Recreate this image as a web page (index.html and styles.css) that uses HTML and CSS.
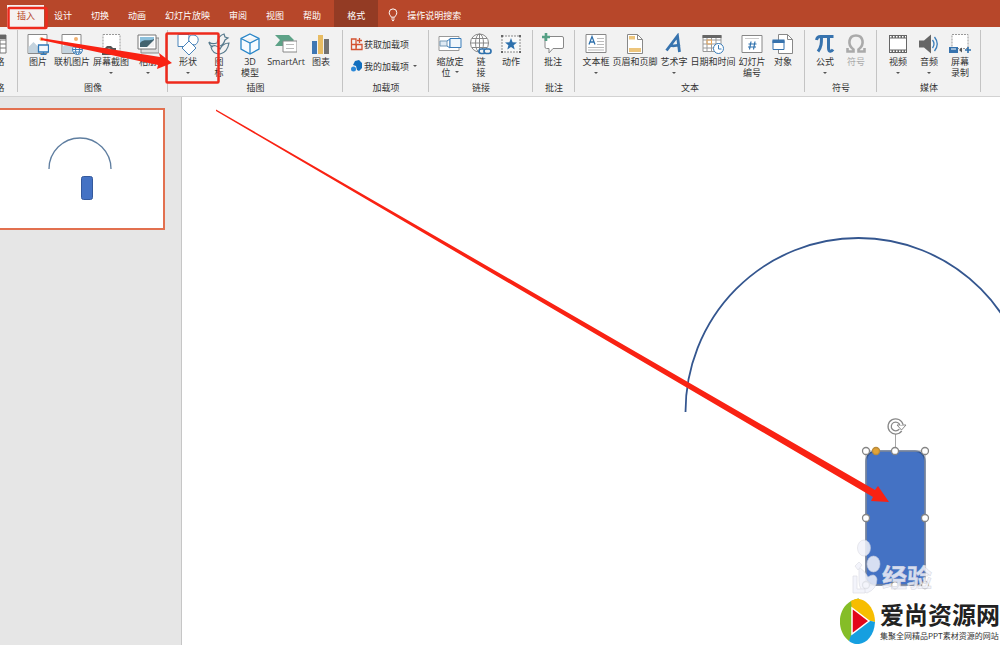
FILE: index.html
```
<!DOCTYPE html>
<html lang="zh-CN">
<head>
<meta charset="utf-8">
<title>演示文稿</title>
<link rel="stylesheet" href="styles.css">
</head>
<body>
<div class="app">
  <nav class="tabs">
    <button class="tab active">插入</button>
    <button class="tab">设计</button>
    <button class="tab">切换</button>
    <button class="tab">动画</button>
    <button class="tab">幻灯片放映</button>
    <button class="tab">审阅</button>
    <button class="tab">视图</button>
    <button class="tab">帮助</button>
    <button class="tab context">格式</button>
    <button class="tab tell">
      <svg class="bulb" viewBox="0 0 10 14"><path d="M3.2 9.2C3 7.800 1.200 7 1.200 4.700a3.800 3.800 0 0 1 7.600 0C8.800 7 7 7.800 6.800 9.200zM3.300 11h3.400M4 12.600h2" fill="none" stroke="#fff"/></svg>
      操作说明搜索
    </button>
  </nav>

  <div class="ribbon">
    <section class="group">
      <div class="items center">
        <button class="item w30">
          <svg class="icon" viewBox="0 0 22 22"><path d="M1 2h20v18H1zM1 7h20M1 11h20M1 15h20M8 7v13M15 7v13" fill="#fff" stroke="#777"/><path d="M1 2h20v4H1z" fill="#666"/></svg>
          <span class="label">表格</span><i class="caret"></i>
        </button>
      </div>
      <h2 class="caption">表格</h2>
    </section>

    <section class="group">
      <div class="items pad4">
        <button class="item w32">
          <svg class="icon" viewBox="0 0 22 22"><path d="M1 1.500h19v19H1z" fill="#fff" stroke="#888"/><path d="M1.500 14l5-5 5 5v6h-10z" fill="#c4d3de"/><circle cx="14.500" cy="6" r="2" fill="#f0b070"/><path d="M11.500 12h10v7h-10zM16.500 19v2M13.500 21.500h6" fill="#f4f8fc" stroke="#2f78b8" stroke-width="1.300"/></svg>
          <span class="label">图片</span>
        </button>
        <button class="item w36">
          <svg class="icon" viewBox="0 0 22 22"><path d="M1 1.500h19v19H1z" fill="#fff" stroke="#888"/><path d="M1.500 14l5-5 5 5v6h-10z" fill="#c4d3de"/><circle cx="15" cy="6" r="2" fill="#f0b070"/><g fill="#fff" stroke="#3b7db9"><circle cx="16.500" cy="16.500" r="5"/><ellipse cx="16.500" cy="16.500" rx="2" ry="5"/><path d="M11.500 16.500h10M12.500 14h8M12.500 19h8"/></g></svg>
          <span class="label">联机图片</span>
        </button>
        <button class="item w42">
          <svg class="icon" viewBox="0 0 22 22"><path d="M3 1.500h17v18H3z" fill="#fff" stroke="#999" stroke-dasharray="2 1"/><path d="M2 15h3l2-2h4l2 2h3v7H2z" fill="#555"/><circle cx="9" cy="18" r="2.500" fill="#ddd"/></svg>
          <span class="label">屏幕截图</span><i class="caret"></i>
        </button>
        <button class="item w32">
          <svg class="icon" viewBox="0 0 22 22"><path d="M4 5h18v15H4z" fill="#ddd" stroke="#888"/><path d="M1 2h18v14H1z" fill="#fff" stroke="#777"/><path d="M3 4h14v10H3z" fill="#8cc0dc"/><path d="M3 10c4-5 8-1 14-4v8H3z" fill="#42636f"/><path d="M10 14l7-7v7z" fill="#f1f1f1"/></svg>
          <span class="label">相册</span><i class="caret"></i>
        </button>
      </div>
      <h2 class="caption">图像</h2>
    </section>

    <section class="group">
      <div class="items pad5">
        <button class="item w30">
          <svg class="icon" viewBox="0 0 22 22"><g fill="#fff" stroke="#4a84ba"><path d="M1 1.500h11v12H1z"/><path d="M13 11c-2-4-2-9 3-9 6 0 7 7 2 10z"/><path d="M12 8l7 7-7 7-7-7z"/></g></svg>
          <span class="label">形状</span><i class="caret"></i>
        </button>
        <button class="item w32">
          <svg class="icon" viewBox="0 0 22 22"><g fill="none" stroke="#55798c" stroke-width="1.200"><path d="M1 9c2 2 5 2 8 1 1-5 3-8 7-9l1 3 3 1-3 2c-1 3-2 5-5 6M1 9c0 3 2 4 4 5"/><path d="M3 14c2-2 7-2 9 2 2-4 5-6 9-6-1 6-4 10-9 11-4 0-8-2-9-7z"/></g></svg>
          <span class="label">图<br>标</span>
        </button>
        <button class="item w30">
          <svg class="icon" viewBox="0 0 22 22"><path d="M11 1l9 4.500v10.500l-9 5-9-5V5.500zM2 5.500l9 4.500 9-4.500M11 10v11" fill="#f7fbff" stroke="#2a86c8" stroke-width="1.300"/></svg>
          <span class="label">3D<br>模型</span>
        </button>
        <button class="item w42">
          <svg class="icon" viewBox="0 0 22 22"><path d="M0 2h14l5 5-5 6H0l5-6z" fill="#5da287"/><path d="M8 8h14v11H8z" fill="#fff" stroke="#888"/><path d="M11 11.500h8M11 15.500h8" stroke="#bbb"/></svg>
          <span class="label">SmartArt</span>
        </button>
        <button class="item w28">
          <svg class="icon" viewBox="0 0 22 22"><path d="M2 8h5v13H2z" fill="#3f77b3"/><path d="M8 2h5v19H8z" fill="#e8bc63"/><path d="M14 6h5v15h-5z" fill="#737373"/></svg>
          <span class="label">图表</span>
        </button>
      </div>
      <h2 class="caption">插图</h2>
    </section>

    <section class="group">
      <div class="addins">
        <button class="addin">
          <svg class="small" viewBox="0 0 14 14"><path d="M1.500 2h4.500v10.500h-4.500zM1.500 7.500h10.500M6.500 7.500H12v5H6z" fill="none" stroke="#d35230" stroke-width="1.300"/><path d="M9.500 1v5M7 3.500h5" stroke="#d35230" stroke-width="1.300"/></svg>
          获取加载项
        </button>
        <button class="addin">
          <svg class="small" viewBox="0 0 14 14"><path d="M5 2l4-1 3 3v5l-3 3-2-1-1-4-3-1z" fill="#106ebe"/><circle cx="3.500" cy="10" r="2.500" fill="#2b88d8"/></svg>
          我的加载项<i class="caret side"></i>
        </button>
      </div>
      <h2 class="caption">加载项</h2>
    </section>

    <section class="group">
      <div class="items pad5">
        <button class="item w32">
          <svg class="icon wide" viewBox="0 0 24 22"><path d="M1 3.500h20v14H1z" fill="#fff" stroke="#999"/><path d="M2 8h7v5H2z" fill="#dfeaf4" stroke="#7799b5"/><path d="M9 8l3-2v9l-3-2" fill="none" stroke="#3b7db9"/><path d="M12 5.500h11v9H12z" fill="#eef6fc" stroke="#3b7db9"/></svg>
          <span class="label">缩放定<br>位<i class="caret inline"></i></span>
        </button>
        <button class="item w30">
          <svg class="icon" viewBox="0 0 22 22"><g fill="none" stroke="#888"><circle cx="9.500" cy="10" r="9" fill="#fff"/><ellipse cx="9.500" cy="10" rx="4" ry="9"/><path d="M.5 10h18M2 5.500h15M2 14.500h15M9.500 1v18"/></g><g fill="#f2f2f2" stroke="#2f71ad" stroke-width="1.700"><rect x="9" y="16" width="7" height="4.500" rx="2.200"/><rect x="14" y="16" width="7" height="4.500" rx="2.200"/></g></svg>
          <span class="label">链<br>接</span>
        </button>
        <button class="item w30">
          <svg class="icon" viewBox="0 0 22 22"><path d="M2 3h18v16H2z" fill="#f8f8f8" stroke="#888" stroke-dasharray="2 1"/><path d="M1 2h2v2H1zM19 2h2v2h-2zM1 18h2v2H1zM19 18h2v2h-2z" fill="#666"/><path d="M11 5l1.600 4.200 4.400.3-3.400 2.800 1.100 4.200L11 14.100l-3.700 2.400 1.100-4.200L5 9.500l4.400-.3z" fill="#2f71ad"/></svg>
          <span class="label">动作</span>
        </button>
      </div>
      <h2 class="caption">链接</h2>
    </section>

    <section class="group">
      <div class="items pad5">
        <button class="item w30">
          <svg class="icon wide" viewBox="0 0 24 22"><path d="M4 3.500h17q1.500 0 1.500 1.500v9q0 1.500-1.500 1.500h-9l-4 4.500v-4.500H5.500Q4 15.500 4 14z" fill="#fff" stroke="#888"/><path d="M5 0v8M1 4h8" stroke="#55a085" stroke-width="2.600"/></svg>
          <span class="label">批注</span>
        </button>
      </div>
      <h2 class="caption">批注</h2>
    </section>

    <section class="group">
      <div class="items pad5">
        <button class="item w32">
          <svg class="icon" viewBox="0 0 22 22"><path d="M1 1.500h20v18H1z" fill="#fff" stroke="#888"/><path d="M4 11.500l3-8 3 8M5 9h4" fill="none" stroke="#2f71ad" stroke-width="1.300"/><path d="M12 5.500h7M12 8.500h7M12 11.500h7M3 14.500h16M3 17h16" stroke="#bbb"/></svg>
          <span class="label">文本框</span><i class="caret"></i>
        </button>
        <button class="item w46">
          <svg class="icon" viewBox="0 0 22 22"><path d="M3.500 1.500h10l5 5v14h-15z" fill="#fff" stroke="#888"/><path d="M13.500 1.500v5h5" fill="none" stroke="#888"/><path d="M5 3h6v3.500H5zM5 15h12v4H5z" fill="#edc57c"/></svg>
          <span class="label">页眉和页脚</span>
        </button>
        <button class="item w32">
          <svg class="icon" viewBox="0 0 22 22"><path d="M3.500 17.500L14.500 3l2 16M8 12.500c3 1 6 0 9-1" fill="none" stroke="#3773ae" stroke-width="2.800"/></svg>
          <span class="label">艺术字</span><i class="caret"></i>
        </button>
        <button class="item w46">
          <svg class="icon" viewBox="0 0 22 22"><path d="M1 2.500h18v16H1zM1 7h18M1 11h18M1 15h18M5 5v13.500M9.500 5v13.500M14 5v13.500" fill="#fff" stroke="#999"/><path d="M.5 2h19v3H.5z" fill="#666"/><path d="M5 7h4.500v4H5z" fill="none" stroke="#e9a95d"/><circle cx="16.500" cy="15.500" r="5" fill="#fff" stroke="#3b7db9"/><path d="M16.500 12v4h3" fill="none" stroke="#3b7db9"/></svg>
          <span class="label">日期和时间</span>
        </button>
        <button class="item w32">
          <svg class="icon" viewBox="0 0 22 22"><path d="M1 2.500h20v17H1z" fill="#fff" stroke="#888"/><path d="M4 5.500h14" stroke="#ccc"/><path d="M10 8.500l-1.500 8M14 8.500l-1.500 8M7.500 11h8M7 14h8" stroke="#2f71ad" stroke-width="1.200"/></svg>
          <span class="label">幻灯片<br>编号</span>
        </button>
        <button class="item w30">
          <svg class="icon" viewBox="0 0 22 22"><path d="M6.500 1.500h9l5 5v14h-14z" fill="#fff" stroke="#888"/><path d="M15.500 1.500v5h5" fill="none" stroke="#888"/><path d="M1 7.500h11v9H1z" fill="#fff" stroke="#3773ae"/><path d="M.5 6.500h12v3.500H.5z" fill="#3773ae"/></svg>
          <span class="label">对象</span>
        </button>
      </div>
      <h2 class="caption">文本</h2>
    </section>

    <section class="group">
      <div class="items pad5">
        <button class="item w30">
          <svg class="icon" viewBox="0 0 22 22"><path d="M2.500 7c.5-3 2-3.500 4-3.500h13M7.500 4c0 6 0 10-3.500 14.500M14.500 4v11c0 4 3 4 4.500 1.500" fill="none" stroke="#3773ae" stroke-width="3"/></svg>
          <span class="label">公式</span><i class="caret"></i>
        </button>
        <button class="item w32" disabled>
          <svg class="icon" viewBox="0 0 22 22"><path d="M2.500 15v3.500h6v-2C2 12 3.500 2.500 11 2.500s9 9.500 2.500 14v2h6V15" fill="none" stroke="#aaa" stroke-width="2.600"/></svg>
          <span class="label">符号</span>
        </button>
      </div>
      <h2 class="caption">符号</h2>
    </section>

    <section class="group">
      <div class="items pad5">
        <button class="item w32">
          <svg class="icon" viewBox="0 0 22 22"><path d="M2 2h18v18H2z" fill="#666"/><path d="M3 5.500h16v11H3z" fill="#fff"/><path d="M3 3.700h16M3 18.300h16" stroke="#fff" stroke-width="1.600" stroke-dasharray="1.500 1.500"/></svg>
          <span class="label">视频</span><i class="caret"></i>
        </button>
        <button class="item w30">
          <svg class="icon" viewBox="0 0 22 22"><path d="M1 7.500h5l7-6v19l-7-6H1z" fill="#666"/><path d="M14.500 7q3 4 0 8M16.500 4q5.500 7 0 14" fill="none" stroke="#3b7db9" stroke-width="1.300"/></svg>
          <span class="label">音频</span><i class="caret"></i>
        </button>
        <button class="item w32">
          <svg class="icon" viewBox="0 0 22 22"><path d="M3 1.500h16v14H3z" fill="#fff" stroke="#999" stroke-dasharray="2 1"/><path d="M0 14h9v6H0z" fill="#3773ae"/><path d="M2 16h5" stroke="#fff"/><path d="M13 14.500v5l-3-2.500z" fill="#555"/><path d="M19 14v6M16 17h6" stroke="#2f71ad" stroke-width="1.600"/></svg>
          <span class="label">屏幕<br>录制</span>
        </button>
      </div>
      <h2 class="caption">媒体</h2>
    </section>
  </div>

  <main class="workspace">
    <aside class="panel">
      <div class="thumb">
        <svg class="thumb-art" viewBox="0 0 163 118"><path d="M49 59a31 31 0 0 1 62 0" fill="none" stroke="#5f7ea0" stroke-width="1.300"/><rect x="81.500" y="66.500" width="11" height="23" rx="2" fill="#4472c4" stroke="#34599c"/></svg>
      </div>
    </aside>
    <div class="canvas">
      <svg class="drawing" width="818" height="548" viewBox="182 97 818 548">
        <path d="M685.500 412A172 173 0 0 1 1031.500 412" fill="none" stroke="#34568f" stroke-width="1.800"/>
        <rect x="866" y="451" width="59" height="134" rx="10" fill="#4472c4" stroke="#34568f" stroke-width="1.500"/>
        <path d="M895.500 434v14M866 451h59v134h-59z" fill="none" stroke="#a5a5a5"/>
        <path d="M900.500 430a6 6 0 1 1 1-5" fill="none" stroke="#888" stroke-width="4.500"/>
        <path d="M897 425h9l-4.500 5z" fill="#fff" stroke="#888"/>
        <path d="M900.500 430a6 6 0 1 1 1-5" fill="none" stroke="#fff" stroke-width="2"/>
        <g fill="#fff" stroke="#858585" stroke-width="1.300">
          <circle cx="866" cy="451" r="3.500"/><circle cx="895" cy="451" r="3.500"/><circle cx="925" cy="451" r="3.500"/>
          <circle cx="866" cy="518" r="3.500"/><circle cx="925" cy="518" r="3.500"/>
          <circle cx="866" cy="585" r="3.500"/><circle cx="895" cy="585" r="3.500"/><circle cx="925" cy="585" r="3.500"/>
          <circle cx="876" cy="451" r="3.500" fill="#e2a336" stroke="#b98b3c"/>
        </g>
        <g fill="#f1f3fb" stroke="#d5d5de" stroke-width=".6" opacity=".85">
          <ellipse cx="864" cy="548" rx="6.500" ry="8"/><ellipse cx="873.500" cy="564" rx="6.500" ry="8"/>
          <path d="M859 567q6 4 9 10 7-5 9 2 0 10-10 14-8-2-8-12z"/>
          <path d="M853 576v17h12v-4h-8v-13zM855 566l4-4 3 3-4 5z"/>
        </g>
        <text class="watermark" x="882" y="587">经验</text>
      </svg>
      <div class="brand">
        <svg class="brand-logo" viewBox="0 0 36 46"><path d="M11 3C-4 12-3 34 9 43L15 34 12 12 19 0z" fill="#85bd27"/><path d="M11 3C22-4 35 8 35 24L27 22 12 12z" fill="#f7bd00"/><path d="M35 24C34 43 19 51 9 43L12 34 27 22z" fill="#169fe0"/><path d="M12 10L29 23 12 36z" fill="#e3061b" stroke="#fff" stroke-width="1.500"/></svg>
        <div class="brand-text">
          <strong class="brand-name">爱尚资源网</strong>
          <span class="brand-line">集聚全网精品PPT素材资源的网站</span>
        </div>
      </div>
    </div>
  </main>

  <svg class="marks" width="1000" height="645" viewBox="0 0 1000 645">
    <g fill="none" stroke="#ee2a1c" stroke-width="2.500"><rect x="8.500" y="8" width="38" height="20" rx="1"/><rect x="166.500" y="33.500" width="52" height="49" rx="1"/></g>
    <g fill="#f92213"><path d="M41 38L160 57l-1-4 13 10-15 6 1-4L41 40z"/><path d="M216 109.500L875 490l3-4 11 16-18-1 2-4L216 111z"/></g>
  </svg>
</div>
</body>
</html>
```
FILE: styles.css
```
* { box-sizing: border-box; }

body {
  margin: 0;
  font: 9px/11px "Open Sans", "Noto Sans CJK SC", sans-serif;
  color: #333;
  background: #fff;
}

button {
  margin: 0;
  padding: 0;
  border: 0;
  background: none;
  font: inherit;
  color: inherit;
  white-space: nowrap;
}

.app {
  position: relative;
  display: flex;
  flex-direction: column;
  min-height: 100vh;
  overflow: hidden;
}

/* Tab strip */
.tabs {
  display: flex;
  height: 27px;
  padding: 5px 0 0 7px;
  background: #b7472a;
  color: #fff;
}

.tab {
  display: flex;
  align-items: center;
  padding: 0 9px 2px 10px;
}

.tab.active {
  background: #f5f1f0;
  color: #b7472a;
}

.tab.context {
  margin: -5px 0 0 4px;
  padding: 5px 13px 2px;
  background: #933b24;
}

.tab.tell { gap: 9px; }

.bulb {
  width: 10px;
  height: 14px;
}

/* Ribbon */
.ribbon {
  display: grid;
  grid-template-columns: 45px 150px 175px 86px 104px 42px 230px 72px 104px;
  height: 70px;
  margin-left: -27px;
  background: #f2f2f2;
  border-bottom: 1px solid #d2d2d2;
}

.group {
  display: flex;
  flex-direction: column;
  justify-content: space-between;
  padding-bottom: 2px;
  background: linear-gradient(#c4c4c4, #c4c4c4) right 3px / 1px 62px no-repeat;
}

.items {
  display: flex;
  align-items: flex-start;
  padding-top: 6px;
}

.items.center { justify-content: center; }
.items.pad4 { padding-left: 4px; }
.items.pad5 { padding-left: 5px; }

.item {
  display: flex;
  flex: none;
  flex-direction: column;
  align-items: center;
}

.item:disabled { color: #aaa; }

.w28 { width: 28px; }
.w30 { width: 30px; }
.w32 { width: 32px; }
.w36 { width: 36px; }
.w42 { width: 42px; }
.w46 { width: 46px; }

.icon {
  width: 22px;
  height: 22px;
  margin-bottom: 1px;
}

.icon.wide { width: 24px; }

.caret {
  width: 4px;
  margin-top: 5px;
  border: 2px solid transparent;
  border-top-color: #555;
  border-bottom: 0;
}

.caret.inline {
  display: inline-block;
  margin: 0 0 3px 4px;
}

.caret.side { margin: 0 0 0 4px; }

.caption {
  margin: 0;
  font-size: 9px;
  font-weight: 400;
  line-height: 12px;
  text-align: center;
}

.addins {
  display: flex;
  flex-direction: column;
  gap: 8px;
  padding: 10px 0 0 7px;
}

.addin {
  display: flex;
  align-items: center;
  height: 14px;
}

.small {
  width: 14px;
  height: 14px;
}

/* Slide list and canvas */
.workspace {
  display: flex;
  flex: 1;
}

.panel {
  flex: none;
  width: 182px;
  padding-top: 11px;
  background: #e6e6e6;
  border-right: 1px solid #c6c6c6;
}

.thumb {
  width: 165px;
  border: 2px solid #e2704f;
  border-left: 0;
  background: #fff;
}

.thumb-art {
  display: block;
  width: 163px;
  height: 118px;
}

.canvas {
  position: relative;
  flex: 1;
  overflow: hidden;
  background: #fff;
}

.drawing {
  position: absolute;
  top: 0;
  left: 0;
}

.watermark {
  font: 700 25px "Noto Sans CJK SC", sans-serif;
  fill: #f1f3fb;
  fill-opacity: .85;
  stroke: #d5d5de;
  stroke-width: .5px;
}

.brand {
  position: absolute;
  right: 0;
  bottom: 1px;
  display: flex;
  align-items: center;
  gap: 4px;
}

.brand-logo {
  width: 36px;
  height: 46px;
}

.brand-text {
  display: flex;
  flex-direction: column;
}

.brand-name {
  font: 700 24px/30px "Noto Sans CJK SC", sans-serif;
  color: #222;
}

.brand-line {
  font: 8px/14px "Noto Sans CJK SC", sans-serif;
  color: #333;
  white-space: nowrap;
}

/* Red callouts over the window */
.marks {
  position: absolute;
  top: 0;
  left: 0;
  pointer-events: none;
}
```
